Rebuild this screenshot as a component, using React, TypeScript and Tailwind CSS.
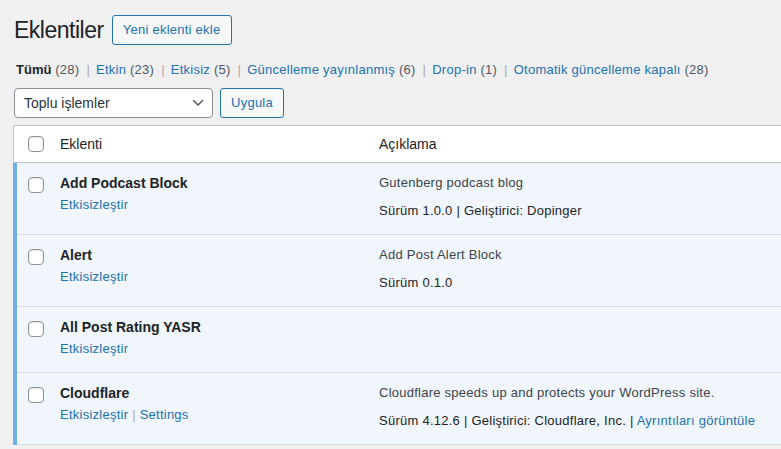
import React from "react";

const Check = () => (
  <div className="w-4 h-4 rounded-[4px] border border-[#8c8f94] bg-white shadow-[inset_0_1px_2px_rgba(0,0,0,0.1)]" />
);

type Row = {
  name: string;
  actions: React.ReactNode;
  desc?: string;
  meta?: React.ReactNode;
};

const Sep = () => <span className="text-[#a7aaad]"> | </span>;
const FSep = () => <span className="inline-block ml-[7px] mr-[6px] text-[#a7aaad]">|</span>;

const rows: Row[] = [
  {
    name: "Add Podcast Block",
    actions: <span className="text-[#2271b1]">Etkisizleştir</span>,
    desc: "Gutenberg podcast blog",
    meta: <>Sürüm 1.0.0 | Geliştirici: Dopinger</>,
  },
  {
    name: "Alert",
    actions: <span className="text-[#2271b1]">Etkisizleştir</span>,
    desc: "Add Post Alert Block",
    meta: <>Sürüm 0.1.0</>,
  },
  {
    name: "All Post Rating YASR",
    actions: <span className="text-[#2271b1]">Etkisizleştir</span>,
  },
  {
    name: "Cloudflare",
    actions: (
      <>
        <span className="text-[#2271b1]">Etkisizleştir</span>
        <Sep />
        <span className="text-[#2271b1]">Settings</span>
      </>
    ),
    desc: "Cloudflare speeds up and protects your WordPress site.",
    meta: (
      <>
        Sürüm 4.12.6 | Geliştirici: Cloudflare, Inc. |{" "}
        <span className="text-[#2271b1]">Ayrıntıları görüntüle</span>
      </>
    ),
  },
];

export default function App() {
  return (
    <div
      className="w-[781px] h-[449px] overflow-hidden bg-[#f0f0f1] text-[#1d2327] text-[13px] tracking-[0.25px]"
      style={{ fontFamily: '"Liberation Sans", Arial, sans-serif' }}
    >
      {/* heading */}
      <div className="flex items-center pt-[15px] pl-[14px]">
        <h1 className="text-[23px] leading-[30px] font-normal tracking-[-0.5px] text-[#1d2327]">Eklentiler</h1>
        <div className="ml-[8px] h-[30px] w-[120px] flex items-center justify-center rounded-[3px] border border-[#2271b1] bg-[#f6f7f7] text-[#2271b1] text-[13px]">
          Yeni eklenti ekle
        </div>
      </div>

      {/* filters */}
      <div className="mt-[15px] pl-[16px] leading-[20px] h-[20px] text-[#50575e] whitespace-nowrap">
        <span className="font-bold text-[#1d2327] tracking-normal">Tümü</span> (28)
        <FSep />
        <span className="text-[#2271b1]">Etkin</span> (23)
        <FSep />
        <span className="text-[#2271b1]">Etkisiz</span> (5)
        <FSep />
        <span className="text-[#2271b1]">Güncelleme yayınlanmış</span> (6)
        <FSep />
        <span className="text-[#2271b1]">Drop-in</span> (1)
        <FSep />
        <span className="text-[#2271b1]">Otomatik güncelleme kapalı</span> (28)
      </div>

      {/* bulk actions */}
      <div className="mt-[8px] pl-[14px] flex items-center gap-[7px]">
        <div className="w-[199px] h-[30px] rounded-[4px] border border-[#8c8f94] bg-white flex items-center justify-between pl-[9px] pr-[8px] text-[14px] tracking-normal text-[#2c3338]">
          <span>Toplu işlemler</span>
          <svg width="12" height="8" viewBox="0 0 12 8" fill="none">
            <path d="M1.5 1.5 L6 6 L10.5 1.5" stroke="#50575e" strokeWidth="1.5" strokeLinecap="round" strokeLinejoin="round" />
          </svg>
        </div>
        <div className="w-[64px] h-[30px] rounded-[3px] border border-[#2271b1] bg-[#f6f7f7] text-[#2271b1] flex items-center justify-center">
          Uygula
        </div>
      </div>

      {/* table */}
      <div className="mt-[7px] ml-[13px]">
        <div className="flex h-[38px] items-center bg-white border border-r-0 border-[#c3c4c7] text-[14px] tracking-normal text-[#1d2327]">
          <div className="w-[46px] pl-[14px]">
            <Check />
          </div>
          <div className="w-[319px]">Eklenti</div>
          <div>Açıklama</div>
        </div>

        {rows.map((r) => (
          <div key={r.name} className="flex bg-[#f0f6fc] border-l-4 border-[#72aee6] shadow-[inset_0_-1px_0_#d8dde3]">
            <div className="w-[43px] pl-[11px] pt-[14px]">
              <Check />
            </div>
            <div className="w-[319px] pt-[10px] pb-[14px]">
              <div className="text-[14px] leading-[20px] font-bold tracking-normal text-[#1d2327]">{r.name}</div>
              <div className="mt-[2px] leading-[20px]">{r.actions}</div>
            </div>
            {r.desc && (
              <div className="pt-[10px] pb-[14px] whitespace-nowrap">
                <div className="leading-[20px] text-[#3c434a]">{r.desc}</div>
                <div className="mt-[8px] leading-[20px] text-[#1d2327]">{r.meta}</div>
              </div>
            )}
          </div>
        ))}
      </div>
    </div>
  );
}
